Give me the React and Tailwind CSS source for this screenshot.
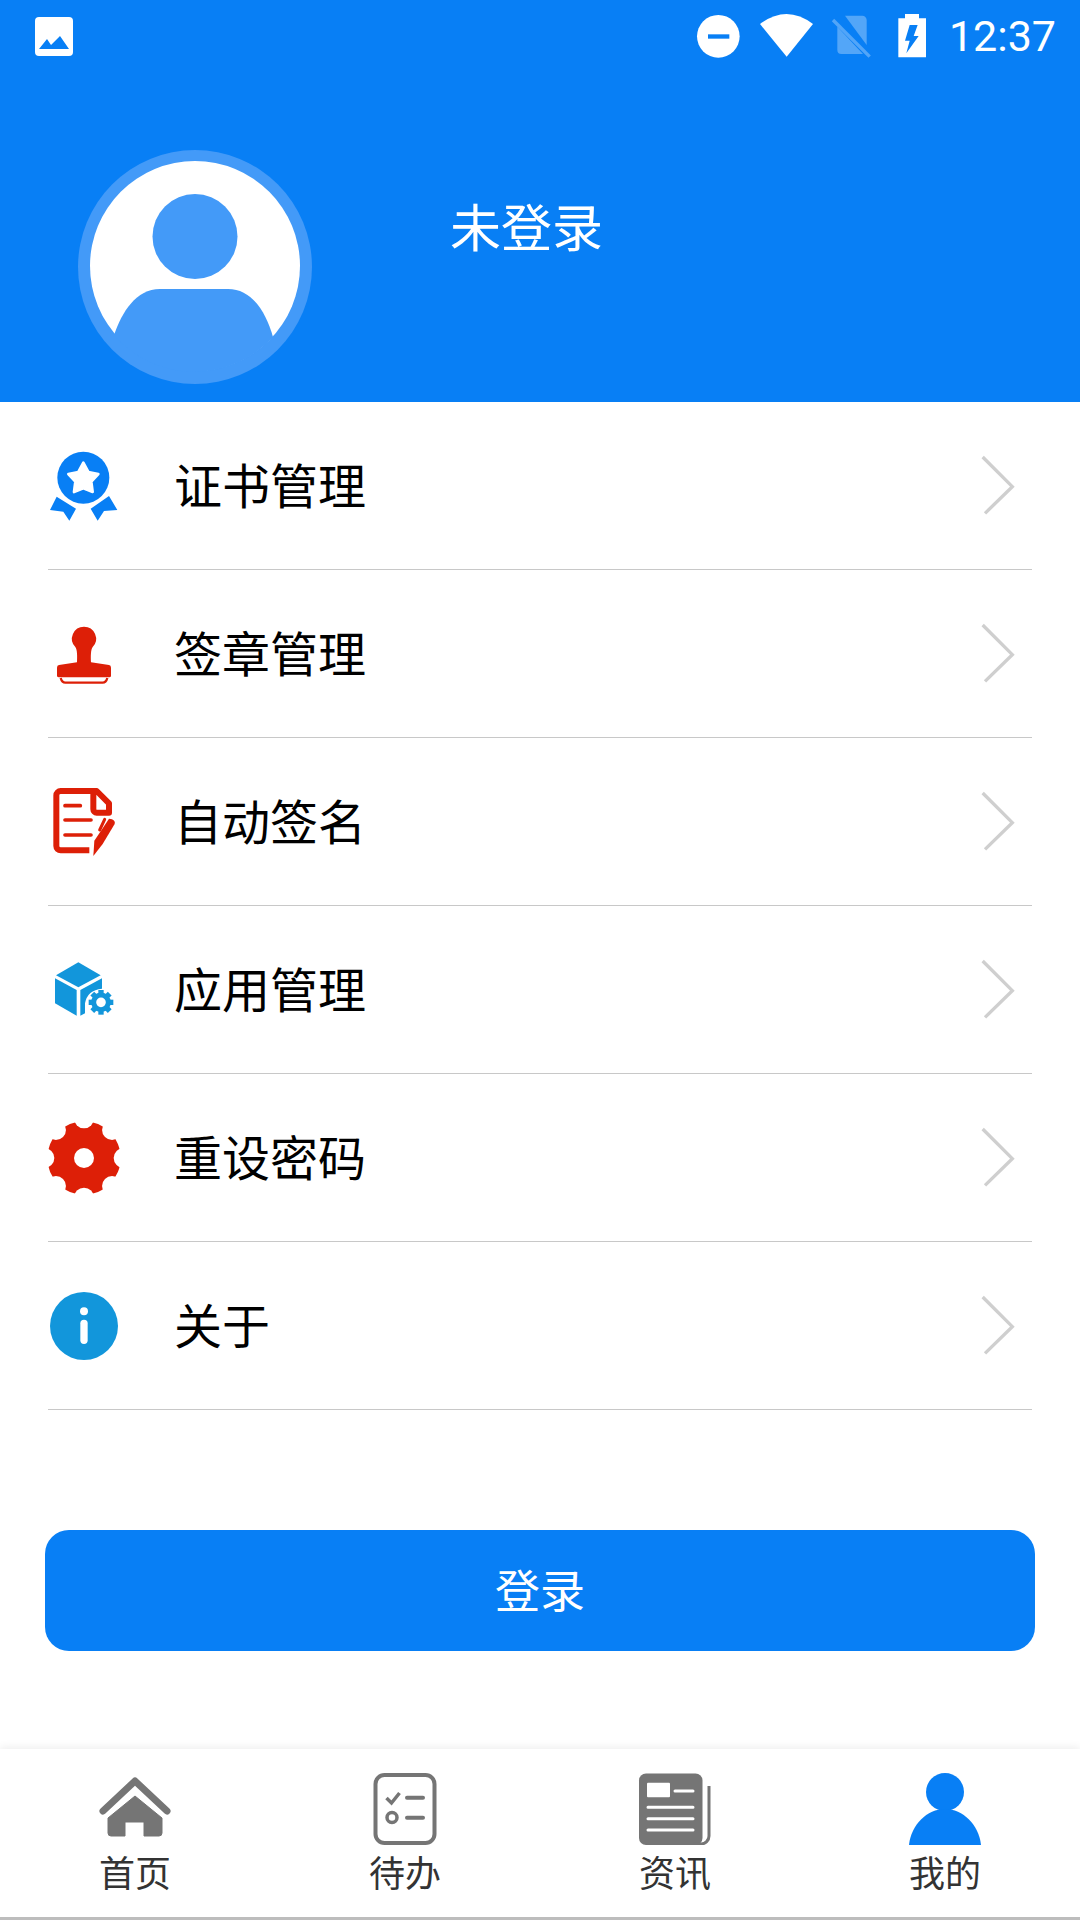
const BLUE = '#087ff5'
const LIGHT = '#439af8'
const RED = '#dd1f07'
const SKY = '#1296db'
const GREY = '#757575'

function ImageIcon() {
  return (
    <svg width="38" height="39" viewBox="0 0 38 39">
      <rect width="38" height="39" rx="4" fill="#fff" />
      <path d="M4 32 L12 22 L16 28 L25 19 L34 32 Z" fill={BLUE} />
    </svg>
  )
}

function StatusIcons() {
  return (
    <svg width="240" height="50" viewBox="99 33 720 150">
      <circle cx="178" cy="109" r="64" fill="#fff" />
      <rect x="147" y="103" width="64" height="13" fill={BLUE} />
      <path d="M303 72 Q383 12 462 72 L383 170 Z" fill="#fff" />
      <g fill="#fff" opacity="0.3">
        <path d="M558 47 H610 a13 13 0 0 1 13 13 V135 Z" />
        <path d="M535 80 L612 162 H547 a12 12 0 0 1 -12 -12 Z" />
      </g>
      <path d="M522 60 L632 170" stroke="#fff" strokeOpacity="0.3" strokeWidth="10" />
      <path d="M738 55 V42 H780 V55 H801 V172 H718 V55 Z" fill="#fff" />
      <path d="M752 75 H776 L764 108 H779 L742 160 L752 122 H738 Z" fill={BLUE} />
    </svg>
  )
}

function Avatar() {
  return (
    <svg width="234" height="234" viewBox="78 150 234 234" className="shrink-0">
      <circle cx="195" cy="267" r="117" fill={LIGHT} />
      <circle cx="195" cy="266" r="105" fill="#fff" />
      <ellipse cx="195" cy="236.500" rx="42.500" ry="42.500" fill={LIGHT} />
      <path d="M114 335 C122 312 136 289 160 289 H228 C252 289 266 312 273 337 A106 106 0 0 1 114 335 Z" fill={LIGHT} />
    </svg>
  )
}

function MedalIcon() {
  return (
    <svg width="80" height="80" viewBox="30 48 240 240">
      <circle cx="160" cy="143" r="78" fill={BLUE} />
      <path
        d="M160 98 L175 126 L205 132 L184 155 L188 186 L160 175 L132 186 L136 155 L115 132 L145 126 Z"
        fill="#fff" stroke="#fff" strokeWidth="8" strokeLinejoin="round"
      />
      <path d="M80 200 L138 236 L118 272 L100 245 L60 240 Z" fill={BLUE} />
      <path d="M237 198 L182 236 L203 272 L222 243 L262 240 Z" fill={BLUE} />
    </svg>
  )
}

function StampIcon() {
  return (
    <svg width="80" height="80" viewBox="30 552 240 240">
      <path
        d="M162 590 a36 36 0 0 1 26 61 c-6 8 -6 30 -5 46 l54 8 q6 1 6 8 v24 q0 5 -5 5 H87 q-6 0 -6 -5 v-24 q0 -7 6 -8 l54 -8 c1 -16 1 -38 -5 -46 a36 36 0 0 1 26 -61 Z"
        fill={RED}
      />
      <path d="M92 744 q4 14 14 14 H218 q10 0 14 -14" fill="none" stroke={RED} strokeWidth="7" />
    </svg>
  )
}

function DocIcon() {
  return (
    <svg width="80" height="80" viewBox="30 36 240 240">
      <path
        d="M178 241 H92 a13 13 0 0 1 -13 -13 V76 a13 13 0 0 1 13 -13 H200 L237 100 V128 H200 a10 10 0 0 1 -10 -10 V63"
        fill="none" stroke={RED} strokeWidth="18" strokeLinejoin="round"
      />
      <path d="M105 107 H151 M105 150 H183 M105 195 H183" stroke={RED} strokeWidth="11" strokeLinecap="round" />
      <path d="M224 148 L209 180" stroke={RED} strokeWidth="9" strokeLinecap="round" />
      <path d="M237 146 Q258 148 254 162 L218 222 L190 258 L193 212 Z" fill={RED} />
    </svg>
  )
}

function CubeIcon() {
  const teeth = [0, 45, 90, 135, 180, 225, 270, 315]
  return (
    <svg width="80" height="80" viewBox="30 540 240 240">
      <path d="M145 577 L212 616 L145 652 L78 616 Z" fill={SKY} />
      <path d="M75 625 L140 660 V737 L75 700 Z" fill={SKY} />
      <path d="M151 660 L216 625 V656 Q172 660 165 700 V730 L151 737 Z" fill={SKY} />
      <circle cx="213" cy="697" r="22" fill="none" stroke={SKY} strokeWidth="15" />
      {teeth.map(a => (
        <rect key={a} x="205" y="660" width="16" height="12" fill={SKY} transform={`rotate(${a} 213 697)`} />
      ))}
    </svg>
  )
}

function GearIcon() {
  const notches = [0, 45, 90, 135, 180, 225, 270, 315]
  return (
    <svg width="80" height="80" viewBox="30 54 240 240">
      <circle cx="162" cy="174" r="110" fill={RED} />
      {notches.map(a => (
        <circle key={a} cx="162" cy="55" r="30" fill="#fff" transform={`rotate(${a} 162 174)`} />
      ))}
      <circle cx="162" cy="174" r="30" fill="#fff" />
    </svg>
  )
}

function InfoIcon() {
  return (
    <svg width="80" height="80" viewBox="30 558 240 240">
      <circle cx="162" cy="678" r="102" fill={SKY} />
      <circle cx="162" cy="634" r="12" fill="#fff" />
      <path d="M162 670 V721" stroke="#fff" strokeWidth="22" strokeLinecap="round" />
    </svg>
  )
}

function Chevron() {
  return (
    <svg width="50" height="84" viewBox="60 14 150 252" className="shrink-0">
      <path d="M98 53 L187 142 L105 222" fill="none" stroke="#cfcfcf" strokeWidth="10" />
    </svg>
  )
}

function HomeIcon() {
  return (
    <svg width="84" height="72" viewBox="0 0 84 72">
      <path d="M10 38 L42 8 L74 38" fill="none" stroke={GREY} strokeWidth="7" strokeLinecap="round" strokeLinejoin="round" />
      <path d="M42 23 L69 45 V60 q0 3 -3 3 H51 V49 H32 V63 H18 q-3 0 -3 -3 V45 Z" fill={GREY} stroke={GREY} strokeLinejoin="round" />
    </svg>
  )
}

function TodoIcon() {
  return (
    <svg width="84" height="72" viewBox="0 0 84 72" fill="none" stroke={GREY}>
      <rect x="12.500" y="2" width="59" height="68" rx="9" strokeWidth="4" />
      <path d="M23.500 25 L28.500 30 L36.500 20" strokeWidth="3.500" />
      <path d="M44 24.700 H60 M44 44.700 H60" strokeWidth="4" strokeLinecap="round" />
      <circle cx="29" cy="44.500" r="5" strokeWidth="3.500" />
    </svg>
  )
}

function NewsIcon() {
  return (
    <svg width="84" height="72" viewBox="0 0 84 72">
      <rect x="6" y="0.500" width="63.500" height="71.500" rx="7" fill={GREY} />
      <path d="M76 13 V63 a8 8 0 0 1 -8 8 H60" fill="none" stroke={GREY} strokeWidth="3" />
      <rect x="14" y="9.700" width="23" height="14.600" rx="1" fill="#fff" />
      <path d="M42 18 H60 M15 34.300 H60 M15 45.700 H60 M15 57 H60" stroke="#fff" strokeWidth="3" strokeLinecap="round" />
    </svg>
  )
}

function MeIcon() {
  return (
    <svg width="84" height="72" viewBox="0 0 84 72">
      <circle cx="42" cy="19" r="19" fill={BLUE} />
      <path d="M6 72 C8 52 24 36 42 36 C60 36 76 52 78 72 Z" fill={BLUE} />
    </svg>
  )
}

const menu = [
  { label: '证书管理', Icon: MedalIcon },
  { label: '签章管理', Icon: StampIcon },
  { label: '自动签名', Icon: DocIcon },
  { label: '应用管理', Icon: CubeIcon },
  { label: '重设密码', Icon: GearIcon },
  { label: '关于', Icon: InfoIcon },
]

const tabs = [
  { label: '首页', Icon: HomeIcon },
  { label: '待办', Icon: TodoIcon },
  { label: '资讯', Icon: NewsIcon },
  { label: '我的', Icon: MeIcon },
]

function MenuRow({ label, Icon }) {
  return (
    <div className="mx-[48px] h-[168px] flex items-center border-b border-[#c8c8c8]">
      <div className="-ml-[8px] shrink-0">
        <Icon />
      </div>
      <span className="ml-[54px] pb-[5px] flex-1 text-[48px] leading-[60px] text-black">{label}</span>
      <Chevron />
      <div className="w-[12px]" />
    </div>
  )
}

export default function App() {
  return (
    <div className="w-[1080px] h-[1920px] bg-white flex flex-col overflow-hidden font-['Noto_Sans_CJK_SC','Noto_Sans',sans-serif]">

      <div className="h-[402px] bg-[#087ff5] shrink-0">
        <div className="h-[72px] pl-[35px] pr-[24px] flex items-center justify-between">
          <ImageIcon />
          <div className="flex items-center gap-[17px]">
            <StatusIcons />
            <span className="font-['Roboto',sans-serif] text-[43px] leading-[50px] text-white">12:37</span>
          </div>
        </div>
        <div className="mt-[78px] ml-[78px] flex items-center">
          <Avatar />
          <span className="ml-[138px] mb-[84px] text-[51px] leading-[64px] text-white">未登录</span>
        </div>
      </div>

      <div>
        {menu.map(m => (
          <MenuRow key={m.label} label={m.label} Icon={m.Icon} />
        ))}
      </div>

      <button className="mt-[120px] mx-[45px] h-[121px] rounded-[24px] bg-[#087ff5] text-white text-[45px] pb-[4px]">
        登录
      </button>

      <div className="mt-auto bg-white shadow-[0_-2px_8px_rgba(0,0,0,0.07)]">
        <div className="grid grid-cols-4 h-[168px] pt-[24px]">
          {tabs.map(t => (
            <div key={t.label} className="flex flex-col items-center">
              <t.Icon />
              <span className="mt-[4px] text-[36px] leading-[44px] text-[#333333]">{t.label}</span>
            </div>
          ))}
        </div>
        <div className="h-[3px] bg-[#bdbdbd]" />
      </div>

    </div>
  )
}
